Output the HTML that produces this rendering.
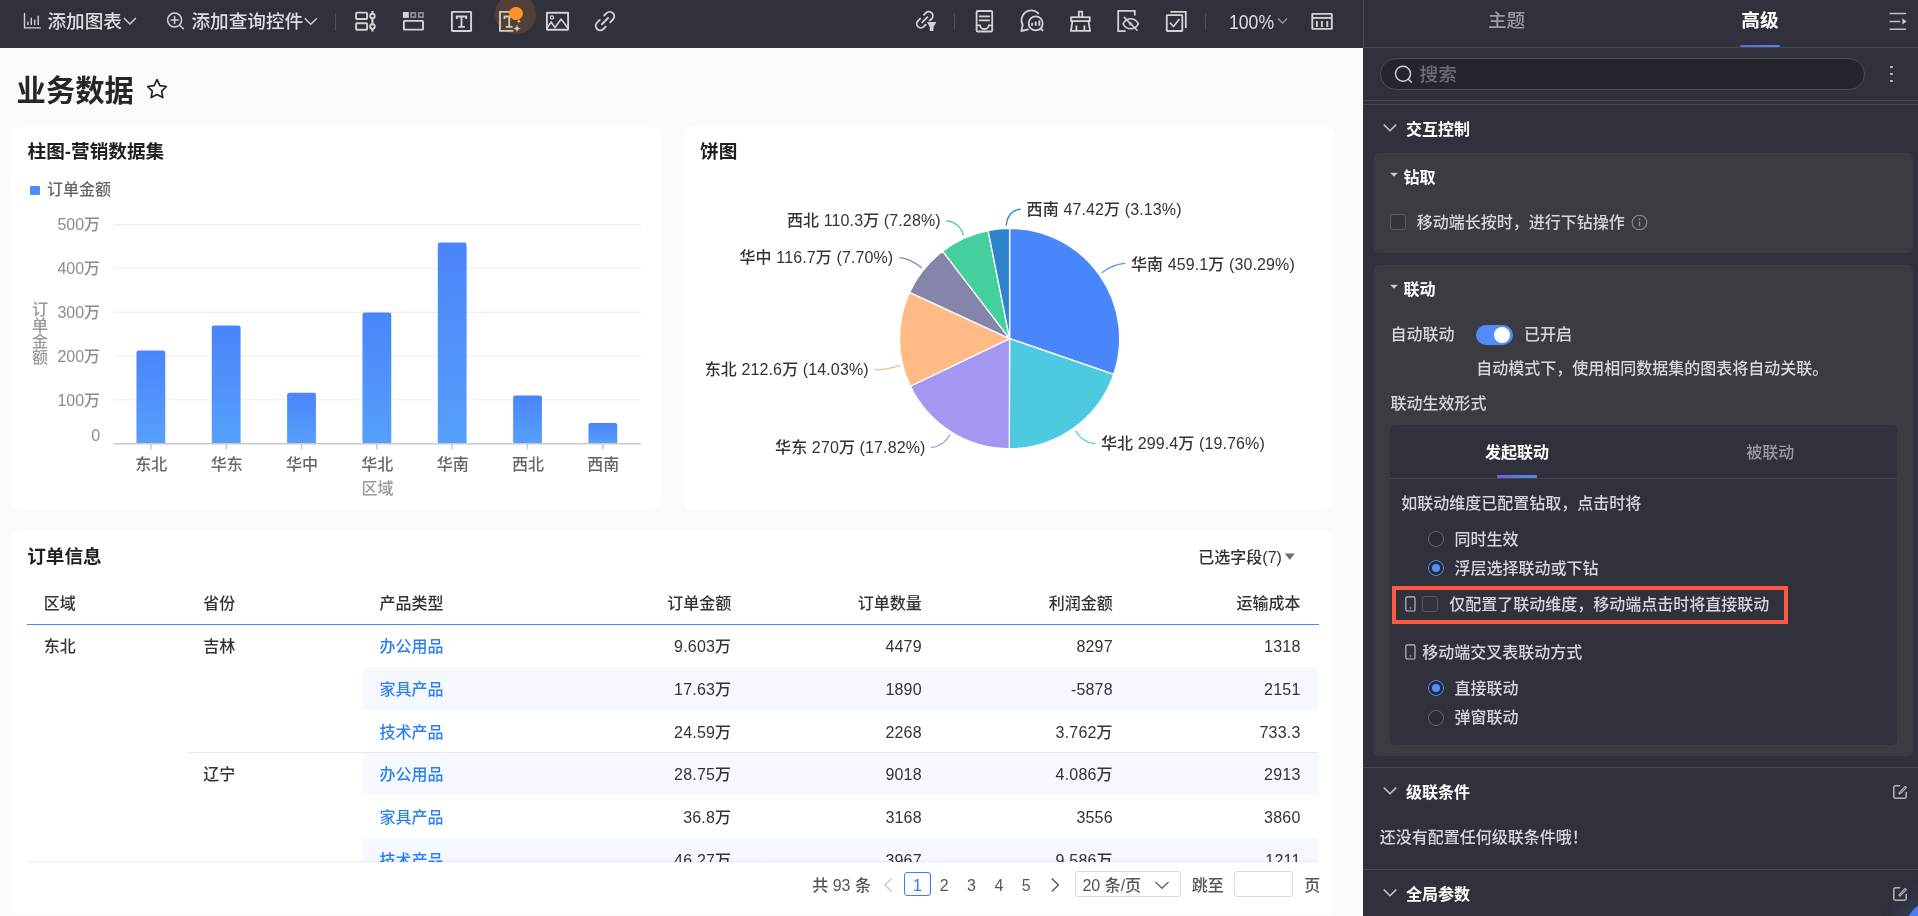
<!DOCTYPE html>
<html lang="zh-CN"><head><meta charset="utf-8"><title>业务数据</title>
<style>
html,body{margin:0;padding:0;}
body{width:1918px;height:916px;overflow:hidden;position:relative;background:#fafafa;font-family:"Liberation Sans","Noto Sans CJK SC",sans-serif;}
.t{position:absolute;white-space:nowrap;}
.b{position:absolute;}
svg text{font-family:"Liberation Sans","Noto Sans CJK SC",sans-serif;}
</style></head><body><div id="root" style="position:absolute;left:0;top:0;width:1918px;height:916px;overflow:hidden;will-change:transform;">
<div class="b" style="left:0px;top:47px;width:1363.00px;height:869.00px;background:#fafafa;"></div>
<div class="t" style="left:16.6px;top:70.84px;font-size:29.3px;line-height:40px;color:#262626;font-weight:700;">业务数据</div>
<svg class="b" style="left:145px;top:77px;" width="24" height="24" viewBox="0 0 24 24"><path d="M12 2.6l2.9 6 6.5.9-4.7 4.6 1.1 6.5L12 17.5l-5.8 3.1 1.1-6.5L2.6 9.5l6.5-.9z" fill="none" stroke="#222" stroke-width="1.7" stroke-linejoin="round"/></svg>
<div class="b" style="left:10.8px;top:125.7px;width:651.70px;height:384.10px;background:#fff;border-radius:10px;"></div>
<div class="b" style="left:684px;top:125.7px;width:650.60px;height:384.10px;background:#fff;border-radius:10px;"></div>
<div class="b" style="left:10.8px;top:530.8px;width:1323.80px;height:384.40px;background:#fff;border-radius:10px;"></div>
<div class="t" style="left:27.5px;top:139.24px;font-size:18.65px;line-height:26px;color:#1f1f1f;font-weight:700;">柱图-营销数据集</div>
<div class="b" style="left:30.3px;top:185.7px;width:9.60px;height:9.60px;background:#4e8bfb;border-radius:1px;"></div>
<div class="t" style="left:47px;top:179.40px;font-size:16px;line-height:22px;color:#666;font-weight:500;">订单金额</div>
<svg class="b" style="left:0px;top:0px;pointer-events:none;" width="700" height="520" viewBox="0 0 700 520"><defs><linearGradient id="bg" x1="0" y1="0" x2="0" y2="1"><stop offset="0" stop-color="#4a84fb"/><stop offset="1" stop-color="#56a0fb"/></linearGradient></defs><line x1="113.7" x2="641.0" y1="399.95" y2="399.95" stroke="#efefef" stroke-width="1.3"/><line x1="113.7" x2="641.0" y1="356.10" y2="356.10" stroke="#efefef" stroke-width="1.3"/><line x1="113.7" x2="641.0" y1="312.25" y2="312.25" stroke="#efefef" stroke-width="1.3"/><line x1="113.7" x2="641.0" y1="268.40" y2="268.40" stroke="#efefef" stroke-width="1.3"/><line x1="113.7" x2="641.0" y1="224.55" y2="224.55" stroke="#efefef" stroke-width="1.3"/><path d="M136.46 443.8 V352.77 Q136.46 350.57 138.66 350.57 H163.06 Q165.26 350.57 165.26 352.77 V443.8 Z" fill="url(#bg)"/><line x1="150.86" x2="150.86" y1="443.8" y2="449.40000000000003" stroke="#c6c6c6" stroke-width="1.4"/><path d="M211.79 443.8 V327.60 Q211.79 325.40 213.99 325.40 H238.39 Q240.59 325.40 240.59 327.60 V443.8 Z" fill="url(#bg)"/><line x1="226.19" x2="226.19" y1="443.8" y2="449.40000000000003" stroke="#c6c6c6" stroke-width="1.4"/><path d="M287.12 443.8 V394.83 Q287.12 392.63 289.32 392.63 H313.72 Q315.92 392.63 315.92 394.83 V443.8 Z" fill="url(#bg)"/><line x1="301.52" x2="301.52" y1="443.8" y2="449.40000000000003" stroke="#c6c6c6" stroke-width="1.4"/><path d="M362.45 443.8 V314.71 Q362.45 312.51 364.65 312.51 H389.05 Q391.25 312.51 391.25 314.71 V443.8 Z" fill="url(#bg)"/><line x1="376.85" x2="376.85" y1="443.8" y2="449.40000000000003" stroke="#c6c6c6" stroke-width="1.4"/><path d="M437.78 443.8 V244.68 Q437.78 242.48 439.98 242.48 H464.38 Q466.58 242.48 466.58 244.68 V443.8 Z" fill="url(#bg)"/><line x1="452.18" x2="452.18" y1="443.8" y2="449.40000000000003" stroke="#c6c6c6" stroke-width="1.4"/><path d="M513.11 443.8 V397.63 Q513.11 395.43 515.31 395.43 H539.71 Q541.91 395.43 541.91 397.63 V443.8 Z" fill="url(#bg)"/><line x1="527.51" x2="527.51" y1="443.8" y2="449.40000000000003" stroke="#c6c6c6" stroke-width="1.4"/><path d="M588.44 443.8 V425.21 Q588.44 423.01 590.64 423.01 H615.04 Q617.24 423.01 617.24 425.21 V443.8 Z" fill="url(#bg)"/><line x1="602.84" x2="602.84" y1="443.8" y2="449.40000000000003" stroke="#c6c6c6" stroke-width="1.4"/><line x1="113.7" x2="641.0" y1="443.8" y2="443.8" stroke="#c9c9c9" stroke-width="1.4"/></svg>
<div class="t" style="right:1817.9px;top:425.30px;font-size:16px;line-height:22px;color:#8c8c8c;font-weight:500;">0</div>
<div class="t" style="right:1817.9px;top:389.85px;font-size:16px;line-height:22px;color:#8c8c8c;font-weight:500;">100万</div>
<div class="t" style="right:1817.9px;top:346.00px;font-size:16px;line-height:22px;color:#8c8c8c;font-weight:500;">200万</div>
<div class="t" style="right:1817.9px;top:302.15px;font-size:16px;line-height:22px;color:#8c8c8c;font-weight:500;">300万</div>
<div class="t" style="right:1817.9px;top:258.30px;font-size:16px;line-height:22px;color:#8c8c8c;font-weight:500;">400万</div>
<div class="t" style="right:1817.9px;top:214.45px;font-size:16px;line-height:22px;color:#8c8c8c;font-weight:500;">500万</div>
<div class="t" style="left:151.3642857142857px;transform:translateX(-50%);top:454.20px;font-size:16px;line-height:22px;color:#666;font-weight:500;">东北</div>
<div class="t" style="left:226.69285714285712px;transform:translateX(-50%);top:454.20px;font-size:16px;line-height:22px;color:#666;font-weight:500;">华东</div>
<div class="t" style="left:302.02142857142854px;transform:translateX(-50%);top:454.20px;font-size:16px;line-height:22px;color:#666;font-weight:500;">华中</div>
<div class="t" style="left:377.34999999999997px;transform:translateX(-50%);top:454.20px;font-size:16px;line-height:22px;color:#666;font-weight:500;">华北</div>
<div class="t" style="left:452.6785714285714px;transform:translateX(-50%);top:454.20px;font-size:16px;line-height:22px;color:#666;font-weight:500;">华南</div>
<div class="t" style="left:528.0071428571429px;transform:translateX(-50%);top:454.20px;font-size:16px;line-height:22px;color:#666;font-weight:500;">西北</div>
<div class="t" style="left:603.3357142857143px;transform:translateX(-50%);top:454.20px;font-size:16px;line-height:22px;color:#666;font-weight:500;">西南</div>
<div class="t" style="left:377.4px;transform:translateX(-50%);top:477.70px;font-size:16px;line-height:22px;color:#999;font-weight:500;">区域</div>
<div class="t" style="left:40.1px;transform:translateX(-50%);top:302.30px;font-size:16px;line-height:16px;color:#999;font-weight:500;">订</div>
<div class="t" style="left:40.1px;transform:translateX(-50%);top:318.35px;font-size:16px;line-height:16px;color:#999;font-weight:500;">单</div>
<div class="t" style="left:40.1px;transform:translateX(-50%);top:334.40px;font-size:16px;line-height:16px;color:#999;font-weight:500;">金</div>
<div class="t" style="left:40.1px;transform:translateX(-50%);top:350.45px;font-size:16px;line-height:16px;color:#999;font-weight:500;">额</div>
<div class="t" style="left:700px;top:139.24px;font-size:18.65px;line-height:26px;color:#1f1f1f;font-weight:700;">饼图</div>
<svg class="b" style="left:684px;top:110px;pointer-events:none;" width="660" height="410" viewBox="684 110 660 410"><path d="M1009.6 338.55 L1009.60 228.45 A110.1 110.1 0 0 1 1113.68 374.46 Z" fill="#4a86fb" stroke="#fff" stroke-width="1.3" stroke-linejoin="round"/><path d="M1009.6 338.55 L1113.68 374.46 A110.1 110.1 0 0 1 1009.29 448.65 Z" fill="#4dc9e0" stroke="#fff" stroke-width="1.3" stroke-linejoin="round"/><path d="M1009.6 338.55 L1009.29 448.65 A110.1 110.1 0 0 1 910.39 386.28 Z" fill="#a497f2" stroke="#fff" stroke-width="1.3" stroke-linejoin="round"/><path d="M1009.6 338.55 L910.39 386.28 A110.1 110.1 0 0 1 909.66 292.35 Z" fill="#ffbb85" stroke="#fff" stroke-width="1.3" stroke-linejoin="round"/><path d="M1009.6 338.55 L909.66 292.35 A110.1 110.1 0 0 1 942.62 251.17 Z" fill="#8585ab" stroke="#fff" stroke-width="1.3" stroke-linejoin="round"/><path d="M1009.6 338.55 L942.62 251.17 A110.1 110.1 0 0 1 988.09 230.57 Z" fill="#45cf9d" stroke="#fff" stroke-width="1.3" stroke-linejoin="round"/><path d="M1009.6 338.55 L988.09 230.57 A110.1 110.1 0 0 1 1009.60 228.45 Z" fill="#2e83cc" stroke="#fff" stroke-width="1.3" stroke-linejoin="round"/><path d="M1101.9 272.7 Q1112.7 264.1 1125.1 263.3" fill="none" stroke="#4a86fb" stroke-width="1.3"/><path d="M1075.5 430.7 Q1082.1 442.3 1095.3 443.9" fill="none" stroke="#4dc9e0" stroke-width="1.3"/><path d="M950 434.5 Q944.1 446 930.9 447.7" fill="none" stroke="#a497f2" stroke-width="1.3"/><path d="M900.5 365.4 Q885.7 370.3 874.2 369.5" fill="none" stroke="#ffbb85" stroke-width="1.3"/><path d="M921.7 267.9 Q911.2 258.8 899.4 257.6" fill="none" stroke="#8585ab" stroke-width="1.3"/><path d="M963.6 235.4 Q959.6 222.3 946.3 220.7" fill="none" stroke="#45cf9d" stroke-width="1.3"/><path d="M1006.2 225.8 Q1007.6 210.2 1020.8 209.2" fill="none" stroke="#2e83cc" stroke-width="1.3"/></svg>
<div class="t" style="left:1026.6px;top:198.90px;font-size:16px;line-height:22px;color:#333;font-weight:500;letter-spacing:0.12px;">西南 47.42万 (3.13%)</div>
<div class="t" style="left:1130.9px;top:253.50px;font-size:16px;line-height:22px;color:#333;font-weight:500;letter-spacing:0.12px;">华南 459.1万 (30.29%)</div>
<div class="t" style="left:1100.9px;top:433.40px;font-size:16px;line-height:22px;color:#333;font-weight:500;letter-spacing:0.12px;">华北 299.4万 (19.76%)</div>
<div class="t" style="right:992.5px;top:436.50px;font-size:16px;line-height:22px;color:#333;font-weight:500;letter-spacing:0.12px;">华东 270万 (17.82%)</div>
<div class="t" style="right:1049.3px;top:359.10px;font-size:16px;line-height:22px;color:#333;font-weight:500;letter-spacing:0.12px;">东北 212.6万 (14.03%)</div>
<div class="t" style="right:1024.7px;top:246.80px;font-size:16px;line-height:22px;color:#333;font-weight:500;letter-spacing:0.12px;">华中 116.7万 (7.70%)</div>
<div class="t" style="right:977.3px;top:210.10px;font-size:16px;line-height:22px;color:#333;font-weight:500;letter-spacing:0.12px;">西北 110.3万 (7.28%)</div>
<div class="t" style="left:27.2px;top:543.94px;font-size:18.65px;line-height:26px;color:#1f1f1f;font-weight:700;">订单信息</div>
<div class="t" style="left:1198.3px;top:547.30px;font-size:16px;line-height:22px;color:#333;font-weight:500;">已选字段(7)</div>
<svg class="b" style="left:1284px;top:552px;" width="12" height="10" viewBox="0 0 12 10"><path d="M0.8 1.5h10l-5 6.2z" fill="#666a80"/></svg>
<div class="b" style="left:0;top:0;width:1918px;height:862.4px;overflow:hidden;">
<div class="b" style="left:363.2px;top:667.0200000000001px;width:955.30px;height:42.72px;background:#f5f8ff;"></div>
<div class="b" style="left:363.2px;top:752.46px;width:955.30px;height:42.72px;background:#f5f8ff;"></div>
<div class="b" style="left:363.2px;top:837.9000000000001px;width:955.30px;height:42.72px;background:#f5f8ff;"></div>
<div class="b" style="left:186.8px;top:751.96px;width:1131.70px;height:1.00px;background:#e9e9e9;"></div>
<div class="t" style="left:43.7px;top:592.90px;font-size:16px;line-height:22px;color:#333;font-weight:500;">区域</div>
<div class="t" style="left:203.2px;top:592.90px;font-size:16px;line-height:22px;color:#333;font-weight:500;">省份</div>
<div class="t" style="left:379.6px;top:592.90px;font-size:16px;line-height:22px;color:#333;font-weight:500;">产品类型</div>
<div class="t" style="right:1186.7px;top:592.90px;font-size:16px;line-height:22px;color:#333;font-weight:500;">订单金额</div>
<div class="t" style="right:996.2px;top:592.90px;font-size:16px;line-height:22px;color:#333;font-weight:500;">订单数量</div>
<div class="t" style="right:805.2px;top:592.90px;font-size:16px;line-height:22px;color:#333;font-weight:500;">利润金额</div>
<div class="t" style="right:617.5px;top:592.90px;font-size:16px;line-height:22px;color:#333;font-weight:500;">运输成本</div>
<div class="b" style="left:27px;top:623.5px;width:1291.50px;height:1.40px;background:#4a86fb;"></div>
<div class="t" style="left:379.6px;top:636.26px;font-size:16px;line-height:22px;color:#2b80f2;font-weight:500;">办公用品</div>
<div class="t" style="right:1186.7px;top:636.26px;font-size:16px;line-height:22px;color:#333;font-weight:500;letter-spacing:0.2px;">9.603万</div>
<div class="t" style="right:996.2px;top:636.26px;font-size:16px;line-height:22px;color:#333;font-weight:500;letter-spacing:0.2px;">4479</div>
<div class="t" style="right:805.2px;top:636.26px;font-size:16px;line-height:22px;color:#333;font-weight:500;letter-spacing:0.2px;">8297</div>
<div class="t" style="right:617.5px;top:636.26px;font-size:16px;line-height:22px;color:#333;font-weight:500;letter-spacing:0.2px;">1318</div>
<div class="t" style="left:379.6px;top:678.98px;font-size:16px;line-height:22px;color:#2b80f2;font-weight:500;">家具产品</div>
<div class="t" style="right:1186.7px;top:678.98px;font-size:16px;line-height:22px;color:#333;font-weight:500;letter-spacing:0.2px;">17.63万</div>
<div class="t" style="right:996.2px;top:678.98px;font-size:16px;line-height:22px;color:#333;font-weight:500;letter-spacing:0.2px;">1890</div>
<div class="t" style="right:805.2px;top:678.98px;font-size:16px;line-height:22px;color:#333;font-weight:500;letter-spacing:0.2px;">-5878</div>
<div class="t" style="right:617.5px;top:678.98px;font-size:16px;line-height:22px;color:#333;font-weight:500;letter-spacing:0.2px;">2151</div>
<div class="t" style="left:379.6px;top:721.70px;font-size:16px;line-height:22px;color:#2b80f2;font-weight:500;">技术产品</div>
<div class="t" style="right:1186.7px;top:721.70px;font-size:16px;line-height:22px;color:#333;font-weight:500;letter-spacing:0.2px;">24.59万</div>
<div class="t" style="right:996.2px;top:721.70px;font-size:16px;line-height:22px;color:#333;font-weight:500;letter-spacing:0.2px;">2268</div>
<div class="t" style="right:805.2px;top:721.70px;font-size:16px;line-height:22px;color:#333;font-weight:500;letter-spacing:0.2px;">3.762万</div>
<div class="t" style="right:617.5px;top:721.70px;font-size:16px;line-height:22px;color:#333;font-weight:500;letter-spacing:0.2px;">733.3</div>
<div class="t" style="left:379.6px;top:764.42px;font-size:16px;line-height:22px;color:#2b80f2;font-weight:500;">办公用品</div>
<div class="t" style="right:1186.7px;top:764.42px;font-size:16px;line-height:22px;color:#333;font-weight:500;letter-spacing:0.2px;">28.75万</div>
<div class="t" style="right:996.2px;top:764.42px;font-size:16px;line-height:22px;color:#333;font-weight:500;letter-spacing:0.2px;">9018</div>
<div class="t" style="right:805.2px;top:764.42px;font-size:16px;line-height:22px;color:#333;font-weight:500;letter-spacing:0.2px;">4.086万</div>
<div class="t" style="right:617.5px;top:764.42px;font-size:16px;line-height:22px;color:#333;font-weight:500;letter-spacing:0.2px;">2913</div>
<div class="t" style="left:379.6px;top:807.14px;font-size:16px;line-height:22px;color:#2b80f2;font-weight:500;">家具产品</div>
<div class="t" style="right:1186.7px;top:807.14px;font-size:16px;line-height:22px;color:#333;font-weight:500;letter-spacing:0.2px;">36.8万</div>
<div class="t" style="right:996.2px;top:807.14px;font-size:16px;line-height:22px;color:#333;font-weight:500;letter-spacing:0.2px;">3168</div>
<div class="t" style="right:805.2px;top:807.14px;font-size:16px;line-height:22px;color:#333;font-weight:500;letter-spacing:0.2px;">3556</div>
<div class="t" style="right:617.5px;top:807.14px;font-size:16px;line-height:22px;color:#333;font-weight:500;letter-spacing:0.2px;">3860</div>
<div class="t" style="left:379.6px;top:849.86px;font-size:16px;line-height:22px;color:#2b80f2;font-weight:500;">技术产品</div>
<div class="t" style="right:1186.7px;top:849.86px;font-size:16px;line-height:22px;color:#333;font-weight:500;letter-spacing:0.2px;">46.27万</div>
<div class="t" style="right:996.2px;top:849.86px;font-size:16px;line-height:22px;color:#333;font-weight:500;letter-spacing:0.2px;">3967</div>
<div class="t" style="right:805.2px;top:849.86px;font-size:16px;line-height:22px;color:#333;font-weight:500;letter-spacing:0.2px;">9.586万</div>
<div class="t" style="right:617.5px;top:849.86px;font-size:16px;line-height:22px;color:#333;font-weight:500;letter-spacing:0.2px;">1211</div>
<div class="t" style="left:43.7px;top:636.26px;font-size:16px;line-height:22px;color:#333;font-weight:500;">东北</div>
<div class="t" style="left:203.2px;top:636.26px;font-size:16px;line-height:22px;color:#333;font-weight:500;">吉林</div>
<div class="t" style="left:203.2px;top:764.42px;font-size:16px;line-height:22px;color:#333;font-weight:500;">辽宁</div>
</div>
<div class="b" style="left:27px;top:857.8px;width:1291.50px;height:5.00px;background:linear-gradient(rgba(0,0,0,0),rgba(0,0,0,0.045));"></div>
<div class="t" style="left:812.2px;top:874.90px;font-size:16px;line-height:22px;color:#555;font-weight:500;">共 93 条</div>
<svg class="b" style="left:882px;top:877.0px;" width="12" height="16" viewBox="0 0 12 16"><path d="M9.6 1.6L3 8l6.6 6.400" fill="none" stroke="#c8c8c8" stroke-width="1.400"/></svg>
<div class="b" style="left:904.3px;top:872.4px;width:26.50px;height:23.20px;background:#fff;border-radius:3px;border:1.3px solid #3a7ff5;box-sizing:border-box;"></div>
<div class="t" style="left:917.5px;transform:translateX(-50%);top:874.90px;font-size:16px;line-height:22px;color:#2b80f2;font-weight:500;">1</div>
<div class="t" style="left:944.2px;transform:translateX(-50%);top:874.90px;font-size:16px;line-height:22px;color:#555;font-weight:500;">2</div>
<div class="t" style="left:971.4px;transform:translateX(-50%);top:874.90px;font-size:16px;line-height:22px;color:#555;font-weight:500;">3</div>
<div class="t" style="left:999px;transform:translateX(-50%);top:874.90px;font-size:16px;line-height:22px;color:#555;font-weight:500;">4</div>
<div class="t" style="left:1026.2px;transform:translateX(-50%);top:874.90px;font-size:16px;line-height:22px;color:#555;font-weight:500;">5</div>
<svg class="b" style="left:1049px;top:877.0px;" width="12" height="16" viewBox="0 0 12 16"><path d="M2.800 1.600L9.400 8l-6.600 6.400" fill="none" stroke="#555" stroke-width="1.400"/></svg>
<div class="b" style="left:1075px;top:871px;width:105.60px;height:26.00px;background:#fff;border-radius:3px;border:1.3px solid #dcdcdc;box-sizing:border-box;"></div>
<div class="t" style="left:1082.4px;top:874.90px;font-size:16px;line-height:22px;color:#555;font-weight:500;">20 条/页</div>
<svg class="b" style="left:1153px;top:878.0px;" width="18" height="14" viewBox="0 0 18 14"><path d="M2.5 4l6.5 6.3L15.5 4" fill="none" stroke="#666" stroke-width="1.4"/></svg>
<div class="t" style="left:1191.8px;top:874.90px;font-size:16px;line-height:22px;color:#555;font-weight:500;">跳至</div>
<div class="b" style="left:1234.2px;top:871px;width:58.40px;height:26.00px;background:#fff;border-radius:3px;border:1.3px solid #dcdcdc;box-sizing:border-box;"></div>
<div class="t" style="left:1304.2px;top:874.90px;font-size:16px;line-height:22px;color:#555;font-weight:500;">页</div>
<div class="b" style="left:0px;top:0px;width:1363.00px;height:47.50px;background:#30313b;"></div>
<svg class="b" style="left:20px;top:8px;" width="26" height="26" viewBox="20 8 26 26"><g fill="none" stroke="#d3d3d5" stroke-width="1.4" stroke-linecap="round" stroke-linejoin="round"><path d="M24.5 12.9V27.9H40.8" stroke-linecap="butt" stroke-linejoin="miter"/><path d="M27.9 25V21.5M31.3 25V17.8M34.7 25V19.8M38.2 25V15.7" stroke-width="1.4" stroke-linecap="butt"/></g></svg>
<div class="t" style="left:47.4px;top:9.34px;font-size:18.65px;line-height:26px;color:#dfdfe1;font-weight:500;">添加图表</div>
<svg class="b" style="left:120px;top:12px;" width="20" height="18" viewBox="120 12 20 18"><g fill="none" stroke="#d3d3d5" stroke-width="1.4" stroke-linecap="round" stroke-linejoin="round"><path d="M123.9 18l6 6.1 6-6.1" stroke-linecap="butt" stroke-linejoin="miter"/></g></svg>
<svg class="b" style="left:162px;top:8px;" width="26" height="26" viewBox="162 8 26 26"><g fill="none" stroke="#d3d3d5" stroke-width="1.5" stroke-linecap="round" stroke-linejoin="round"><circle cx="174.6" cy="20.1" r="7"/><path d="M179.7 25.2L183.4 28.7M171.1 20.1h7M174.6 16.6v7"/></g></svg>
<div class="t" style="left:191.4px;top:9.34px;font-size:18.65px;line-height:26px;color:#dfdfe1;font-weight:500;">添加查询控件</div>
<svg class="b" style="left:300px;top:12px;" width="20" height="18" viewBox="300 12 20 18"><g fill="none" stroke="#d3d3d5" stroke-width="1.4" stroke-linecap="round" stroke-linejoin="round"><path d="M304.7 18.2l6.1 6.1 6.1-6.1" stroke-linecap="butt" stroke-linejoin="miter"/></g></svg>
<div class="b" style="left:335px;top:13.4px;width:1.10px;height:17.60px;background:#50515a;"></div>
<svg class="b" style="left:352px;top:8px;" width="26" height="26" viewBox="352 8 26 26"><g fill="none" stroke="#d3d3d5" stroke-width="1.9" stroke-linecap="round" stroke-linejoin="round"><rect x="356.1" y="12.6" width="11" height="6.4" rx="0.8"/><rect x="356.1" y="23.3" width="11" height="6.4" rx="0.8"/><path d="M372.4 11V13.6M372.4 18.4V24.1M372.4 28.9V31.6" stroke-linecap="butt" stroke-width="2.2"/><circle cx="372.4" cy="16" r="2.3"/><circle cx="372.4" cy="26.5" r="2.3"/></g></svg>
<svg class="b" style="left:400px;top:8px;" width="28" height="26" viewBox="400 8 28 26"><g fill="none" stroke="#d3d3d5" stroke-width="1.9" stroke-linecap="round" stroke-linejoin="round"><rect x="402.9" y="12" width="5.9" height="5.9" fill="#d3d3d5" stroke="none"/><rect x="411.1" y="12.9" width="4.2" height="4.2" stroke="#8b8c93" stroke-width="1.8" stroke-linejoin="miter"/><rect x="418.8" y="12.9" width="4.2" height="4.2" stroke="#8b8c93" stroke-width="1.8" stroke-linejoin="miter"/><rect x="403.9" y="20.9" width="19.1" height="8.7" rx="0.6"/></g></svg>
<svg class="b" style="left:448px;top:8px;" width="28" height="28" viewBox="448 8 28 28"><g fill="none" stroke="#d3d3d5" stroke-width="1.9" stroke-linecap="round" stroke-linejoin="round"><rect x="451.9" y="11.9" width="19.2" height="19.1" rx="0.5" stroke-linejoin="miter"/><path d="M456.8 18.9V16.5H466.2V18.9M461.5 16.5V26.9M458.1 26.9H464.9" stroke-width="1.9" stroke-linecap="butt" stroke-linejoin="miter"/></g></svg>
<svg class="b" style="left:496px;top:8px;" width="30" height="28" viewBox="496 8 30 28"><g fill="none" stroke="#d3d3d5" stroke-width="1.9" stroke-linecap="round" stroke-linejoin="round"><path d="M513 11.9H500V30.9H513.4" stroke-linecap="butt" stroke-linejoin="miter"/><path d="M504.5 18.9V16.5H513.9V18.9M509.2 16.5V26.9M505.8 26.9H512.6" stroke-width="1.9" stroke-linecap="butt" stroke-linejoin="miter"/><path d="M517 24.6c.45 2.6 1.3 3.450 3.900 3.900-2.600.450-3.450 1.300-3.900 3.900-.450-2.600-1.300-3.450-3.900-3.900 2.600-.450 3.450-1.300 3.900-3.900z" fill="#d3d3d5" stroke="none"/><path d="M518.900 18.800c.300 1.600.800 2.100 2.400 2.400-1.600.300-2.100.800-2.400 2.400-.300-1.600-.800-2.100-2.400-2.400 1.600-.300 2.100-.800 2.400-2.400z" fill="#d3d3d5" stroke="none"/></g></svg>
<div class="b" style="left:495.1px;top:-6.3px;width:40.6px;height:40.6px;border-radius:50%;background:rgba(255,146,38,0.155);"></div>
<div class="b" style="left:509.1px;top:6.800px;width:13.900px;height:13.600px;border-radius:50%;background:#ff9429;"></div>
<svg class="b" style="left:543px;top:8px;" width="30" height="26" viewBox="543 8 30 26"><g fill="none" stroke="#d3d3d5" stroke-width="1.9" stroke-linecap="round" stroke-linejoin="round"><rect x="546.9" y="12.7" width="21.2" height="17" rx="0.4" stroke-linejoin="miter"/><circle cx="551.9" cy="17.5" r="1.600" stroke-width="1.300"/><path d="M547.4 27.800l3.600-5.800 4 5.400 6.200-8.300 6.400 8.700" stroke-width="1.600"/></g></svg>
<svg class="b" style="left:592px;top:8px;" width="28" height="28" viewBox="592 8 28 28"><g fill="none" stroke="#d3d3d5" stroke-width="1.9" stroke-linecap="round" stroke-linejoin="round"><g transform="translate(605 21.1) rotate(-45)"><path d="M3.3 -4.5H6.7A4.5 4.5 0 0 1 6.7 4.5H2.8" /><path d="M-3.3 4.5H-6.7A4.5 4.5 0 0 1 -6.7 -4.5H-2.8" /><path d="M-4.422000000000001 0H4.422000000000001"/></g></g></svg>
<svg class="b" style="left:912px;top:8px;" width="28" height="28" viewBox="912 8 28 28"><g fill="none" stroke="#d3d3d5" stroke-width="1.8" stroke-linecap="round" stroke-linejoin="round"><g transform="translate(924.8 19.8) rotate(-45)"><path d="M2.9 -4.1H5.6A4.1 4.1 0 0 1 5.6 4.1H2.5" /><path d="M-2.9 4.1H-5.6A4.1 4.1 0 0 1 -5.6 -4.1H-2.5" /><path d="M-3.6959999999999997 0H3.6959999999999997"/></g><path d="M926.9 22.1h9.500l-2.900 5v3.800h-3.700v-3.800z" fill="#d3d3d5" stroke="#30313b" stroke-width="1.6" paint-order="stroke" stroke-linejoin="miter"/></g></svg>
<div class="b" style="left:954px;top:12.9px;width:1.10px;height:16.00px;background:#50515a;"></div>
<svg class="b" style="left:972px;top:8px;" width="26" height="28" viewBox="972 8 26 28"><g fill="none" stroke="#d3d3d5" stroke-width="1.8" stroke-linecap="round" stroke-linejoin="round"><rect x="976.6" y="11" width="15.6" height="20.500" rx="1"/><path d="M979.6 16.300h9.600M979.6 20.300h9.600"/><path d="M976.6 25.400h3.600a4.200 3.600 0 0 0 8.400 0h3.600"/></g></svg>
<svg class="b" style="left:1017px;top:8px;" width="30" height="28" viewBox="1017 8 30 28"><g fill="none" stroke="#d3d3d5" stroke-width="1.8" stroke-linecap="round" stroke-linejoin="round"><path d="M1038.3 13.400a9.800 9.800 0 0 0-15.600 11.600l-1.400 6 6.600-1.500"/><circle cx="1035.7" cy="23.400" r="7"/><path d="M1032.100 25.700v-2.900M1035.700 25.700v-4.100M1039.300 25.700v-5.300" stroke-linecap="butt" stroke-width="1.900"/><path d="M1040.900 28.600l1.600 1.700" stroke-width="2"/></g></svg>
<svg class="b" style="left:1066px;top:8px;" width="30" height="28" viewBox="1066 8 30 28"><g fill="none" stroke="#d3d3d5" stroke-width="1.8" stroke-linecap="round" stroke-linejoin="round"><path d="M1078.800 17.200v-5.500h3.400v5.500" stroke-linejoin="miter"/><rect x="1071.200" y="17.200" width="18.500" height="3.900" stroke-linejoin="miter"/><path d="M1072.400 21.100l-1.500 9.700h19.100l-1.500-9.700" stroke-linejoin="miter"/><path d="M1076.400 30.800v-5.200M1084.400 30.800v-5.200" stroke-linecap="butt"/></g></svg>
<svg class="b" style="left:1114px;top:6px;" width="30" height="30" viewBox="1114 6 30 30"><g fill="none" stroke="#d3d3d5" stroke-width="1.8" stroke-linecap="round" stroke-linejoin="round"><path d="M1134.800 15.400V10.900H1118.200V31.200H1125.600" stroke-linejoin="miter" stroke-linecap="butt"/><path d="M1123 23.800c2.200-3.600 4.800-5 7.700-5s5.500 1.400 7.700 5c-2.200 3.600-4.800 5-7.700 5s-5.500-1.400-7.700-5z" stroke-width="1.600"/><circle cx="1130.600" cy="23.800" r="1.900" fill="#9c9da3" stroke="none"/><path d="M1124.300 17.400l12.800 12.800" stroke-width="1.600"/></g></svg>
<svg class="b" style="left:1162px;top:8px;" width="30" height="28" viewBox="1162 8 30 28"><g fill="none" stroke="#d3d3d5" stroke-width="1.8" stroke-linecap="round" stroke-linejoin="round"><rect x="1166.800" y="15.100" width="15.500" height="15.900" rx="0.400" stroke-linejoin="miter"/><path d="M1170.300 11.900H1185.800V27.900" stroke-linejoin="miter" stroke-linecap="butt"/><path d="M1169.900 22.700l3.700 3.800 5.800-7.400" stroke-width="1.700" stroke-linejoin="miter" stroke-linecap="butt"/></g></svg>
<div class="b" style="left:1204.8px;top:12.9px;width:1.10px;height:16.00px;background:#50515a;"></div>
<div class="t" style="left:1229.3px;top:8.80px;font-size:19.6px;line-height:26px;color:#dededf;font-weight:400;transform:scaleX(0.9);transform-origin:0 50%;">100%</div>
<svg class="b" style="left:1274px;top:12px;" width="18" height="18" viewBox="1274 12 18 18"><g fill="none" stroke="#a0a1a8" stroke-width="1.2" stroke-linecap="round" stroke-linejoin="round"><path d="M1278 18.500l4.500 4.600 4.500-4.600" stroke-linecap="butt" stroke-linejoin="miter"/></g></svg>
<svg class="b" style="left:1308px;top:8px;" width="28" height="26" viewBox="1308 8 28 26"><g fill="none" stroke="#d3d3d5" stroke-width="1.9" stroke-linecap="round" stroke-linejoin="round"><rect x="1312.300" y="13.900" width="19.500" height="15" rx="0.400" stroke-linejoin="miter"/><path d="M1312.300 17.900h19.500" stroke-linecap="butt"/><path d="M1316.900 20.900v6.200M1321.900 20.900v6.200M1327.300 20.900v6.200" stroke-linecap="butt" stroke-width="1.900"/></g></svg>
<div class="b" style="left:1363px;top:0px;width:555.00px;height:916.00px;background:#30313b;"></div>
<div class="b" style="left:1363px;top:0px;width:1.10px;height:47.50px;background:#4a4b54;"></div>
<div class="b" style="left:1363px;top:47px;width:555.00px;height:1.10px;background:#47484f;"></div>
<div class="t" style="left:1506.6px;transform:translateX(-50%);top:7.84px;font-size:18.65px;line-height:26px;color:#9a9ba3;font-weight:500;">主题</div>
<div class="t" style="left:1760px;transform:translateX(-50%);top:7.74px;font-size:18.65px;line-height:26px;color:#fff;font-weight:700;">高级</div>
<div class="b" style="left:1740px;top:44.5px;width:39.80px;height:2.70px;background:linear-gradient(90deg,#6b62de,#4b8df0);border-radius:1px;"></div>
<svg class="b" style="left:1888px;top:11px;" width="20" height="20" viewBox="0 0 20 20"><g fill="none" stroke="#c4c4c8" stroke-width="1.5"><path d="M1.600 2.600h16.400M1.600 10.400h10.600M1.600 18.200h16.400"/></g><path d="M14.400 7.200l4.200 3.200-4.200 3.200z" fill="#c4c4c8"/></svg>
<div class="b" style="left:1380.4px;top:58.2px;width:484.40px;height:31.40px;background:#25262d;border-radius:16px;border:1.2px solid #4b4c55;box-sizing:border-box;"></div>
<svg class="b" style="left:1393px;top:63.6px;" width="22" height="22" viewBox="0 0 22 22"><g fill="none" stroke="#d2d2d5" stroke-width="1.400" stroke-linecap="round"><circle cx="10" cy="9.800" r="7.500"/><path d="M15.400 15.200l3 3"/></g></svg>
<div class="t" style="left:1419.6px;top:61.84px;font-size:18.65px;line-height:26px;color:#6d6e77;font-weight:500;">搜索</div>
<div class="b" style="left:1890.2px;top:65.5px;width:2.80px;height:2.80px;background:#c4c4c8;border-radius:1.4px;"></div>
<div class="b" style="left:1890.2px;top:72.5px;width:2.80px;height:2.80px;background:#c4c4c8;border-radius:1.4px;"></div>
<div class="b" style="left:1890.2px;top:79.5px;width:2.80px;height:2.80px;background:#c4c4c8;border-radius:1.4px;"></div>
<div class="b" style="left:1363px;top:100px;width:555.00px;height:1.00px;background:#47484f;"></div>
<div class="b" style="left:1363px;top:104px;width:555.00px;height:1.00px;background:#47484f;"></div>
<svg class="b" style="left:1382.2px;top:122.19999999999999px;" width="16" height="12" viewBox="0 0 16 12"><path d="M1.800 2.600l6.200 6.200 6.200-6.200" fill="none" stroke="#c4c4c8" stroke-width="1.500"/></svg>
<div class="t" style="left:1405.9px;top:118.80px;font-size:16px;line-height:22px;color:#fff;font-weight:700;">交互控制</div>
<div class="b" style="left:1374px;top:152.8px;width:538.60px;height:100.60px;background:#3b3c42;border-radius:5px;"></div>
<svg class="b" style="left:1389px;top:172.2px;" width="10" height="6" viewBox="0 0 10 6"><path d="M1.200 0.800h7.600l-3.800 4z" fill="#c9c9cd"/></svg>
<div class="t" style="left:1403.5px;top:166.80px;font-size:16px;line-height:22px;color:#fff;font-weight:700;">钻取</div>
<div class="b" style="left:1390.3px;top:214.2px;width:15.80px;height:15.80px;background:#33343a;border-radius:3px;border:1.1px solid #595a61;box-sizing:border-box;"></div>
<div class="t" style="left:1416.8px;top:212.20px;font-size:16px;line-height:22px;color:#d7d7db;font-weight:500;">移动端长按时，进行下钻操作</div>
<svg class="b" style="left:1631.4px;top:213.8px;" width="17" height="17" viewBox="0 0 17 17"><g fill="none" stroke="#8a8b92" stroke-width="1.100"><circle cx="8.500" cy="8.500" r="7.300"/></g><path d="M8.500 7.400v4.800" stroke="#8f9098" stroke-width="1.300"/><circle cx="8.500" cy="5.200" r="0.900" fill="#8f9098"/></svg>
<div class="b" style="left:1374px;top:265.1px;width:538.60px;height:491.10px;background:#3b3c42;border-radius:5px;"></div>
<svg class="b" style="left:1389px;top:283.9px;" width="10" height="6" viewBox="0 0 10 6"><path d="M1.200 0.800h7.600l-3.800 4z" fill="#c9c9cd"/></svg>
<div class="t" style="left:1403.5px;top:279.20px;font-size:16px;line-height:22px;color:#fff;font-weight:700;">联动</div>
<div class="t" style="left:1390.4px;top:323.90px;font-size:16px;line-height:22px;color:#d7d7db;font-weight:500;">自动联动</div>
<div class="b" style="left:1475.8px;top:325.1px;width:37.20px;height:20.40px;background:#528bfc;border-radius:10.2px;"></div>
<div class="b" style="left:1493.9px;top:327.1px;width:16.40px;height:16.40px;background:#fff;border-radius:8.2px;"></div>
<div class="t" style="left:1524.0px;top:323.90px;font-size:16px;line-height:22px;color:#d7d7db;font-weight:500;">已开启</div>
<div class="t" style="left:1476.2px;top:358.00px;font-size:16px;line-height:22px;color:#d7d7db;font-weight:500;">自动模式下，使用相同数据集的图表将自动关联。</div>
<div class="t" style="left:1390.4px;top:393.20px;font-size:16px;line-height:22px;color:#d7d7db;font-weight:500;">联动生效形式</div>
<div class="b" style="left:1390px;top:425.2px;width:507.10px;height:319.80px;background:#30313b;border-radius:5px;"></div>
<div class="t" style="left:1517.1px;transform:translateX(-50%);top:442.10px;font-size:16px;line-height:22px;color:#fff;font-weight:700;">发起联动</div>
<div class="t" style="left:1770.2px;transform:translateX(-50%);top:442.10px;font-size:16px;line-height:22px;color:#9a9ba3;font-weight:500;">被联动</div>
<div class="b" style="left:1497px;top:474.7px;width:39.90px;height:3.10px;background:linear-gradient(90deg,#6b62de,#4b8df0);border-radius:1px;"></div>
<div class="b" style="left:1390px;top:477.9px;width:507.10px;height:1.10px;background:#47484f;"></div>
<div class="t" style="left:1401.3px;top:493.20px;font-size:16px;line-height:22px;color:#d7d7db;font-weight:500;">如联动维度已配置钻取，点击时将</div>
<div class="b" style="left:1427.8000000000002px;top:531.0px;width:16.20px;height:16.20px;background:#2b2c33;border-radius:8.1px;border:1.1px solid #66676e;box-sizing:border-box;"></div>
<div class="t" style="left:1454.6px;top:529.00px;font-size:16px;line-height:22px;color:#d7d7db;font-weight:500;">同时生效</div>
<div class="b" style="left:1427.8000000000002px;top:559.8px;width:16.20px;height:16.20px;background:#2b2c33;border-radius:8.1px;border:1.2px solid #4f88fb;box-sizing:border-box;"></div>
<div class="b" style="left:1431.9px;top:563.9px;width:8.00px;height:8.00px;background:#5590ff;border-radius:4px;"></div>
<div class="t" style="left:1454.6px;top:557.80px;font-size:16px;line-height:22px;color:#d7d7db;font-weight:500;">浮层选择联动或下钻</div>
<div class="b" style="left:1391.9px;top:585.8px;width:396.60px;height:38.40px;border:4px solid #fb5a46;box-sizing:border-box;"></div>
<svg class="b" style="left:1404.8px;top:596.2px;" width="11" height="16" viewBox="0 0 11 16"><rect x="0.800" y="0.800" width="9.200" height="14.200" rx="1.600" fill="none" stroke="#bdbdc1" stroke-width="1.150"/><circle cx="5.400" cy="12" r="0.800" fill="#bdbdc1"/></svg>
<div class="b" style="left:1422.3px;top:596.4px;width:15.80px;height:15.80px;background:#33343a;border-radius:3px;border:1.1px solid #595a61;box-sizing:border-box;"></div>
<div class="t" style="left:1449.3px;top:594.40px;font-size:16px;line-height:22px;color:#d7d7db;font-weight:500;">仅配置了联动维度，移动端点击时将直接联动</div>
<svg class="b" style="left:1404.8px;top:644.2px;" width="11" height="16" viewBox="0 0 11 16"><rect x="0.800" y="0.800" width="9.200" height="14.200" rx="1.600" fill="none" stroke="#bdbdc1" stroke-width="1.150"/><circle cx="5.400" cy="12" r="0.800" fill="#bdbdc1"/></svg>
<div class="t" style="left:1422.3px;top:641.90px;font-size:16px;line-height:22px;color:#d7d7db;font-weight:500;">移动端交叉表联动方式</div>
<div class="b" style="left:1427.8000000000002px;top:680.1999999999999px;width:16.20px;height:16.20px;background:#2b2c33;border-radius:8.1px;border:1.2px solid #4f88fb;box-sizing:border-box;"></div>
<div class="b" style="left:1431.9px;top:684.3px;width:8.00px;height:8.00px;background:#5590ff;border-radius:4px;"></div>
<div class="t" style="left:1454.6px;top:678.20px;font-size:16px;line-height:22px;color:#d7d7db;font-weight:500;">直接联动</div>
<div class="b" style="left:1427.8000000000002px;top:709.6px;width:16.20px;height:16.20px;background:#2b2c33;border-radius:8.1px;border:1.1px solid #66676e;box-sizing:border-box;"></div>
<div class="t" style="left:1454.6px;top:707.10px;font-size:16px;line-height:22px;color:#d7d7db;font-weight:500;">弹窗联动</div>
<div class="b" style="left:1363px;top:767px;width:555.00px;height:1.10px;background:#47484f;"></div>
<svg class="b" style="left:1382.2px;top:785.4px;" width="16" height="12" viewBox="0 0 16 12"><path d="M1.800 2.600l6.200 6.200 6.200-6.200" fill="none" stroke="#c4c4c8" stroke-width="1.500"/></svg>
<div class="t" style="left:1405.9px;top:782.40px;font-size:16px;line-height:22px;color:#fff;font-weight:700;">级联条件</div>
<svg class="b" style="left:1892px;top:784px;" width="16" height="16" viewBox="0 0 16 16"><g fill="none" stroke="#b6b6ba" stroke-width="1.500" stroke-linecap="round" stroke-linejoin="round"><path d="M7.600 1.800H3.400a1.600 1.600 0 0 0-1.600 1.600v9.200a1.600 1.600 0 0 0 1.600 1.600h9.200a1.600 1.600 0 0 0 1.600-1.600V8.400"/><path d="M6.800 9.200l6.400-6.800 1.200 1.200-6.600 6.600z" stroke-width="1.200"/></g></svg>
<div class="t" style="left:1379.7px;top:827.20px;font-size:16px;line-height:22px;color:#d7d7db;font-weight:500;">还没有配置任何级联条件哦！</div>
<div class="b" style="left:1363px;top:868.6px;width:555.00px;height:1.10px;background:#47484f;"></div>
<svg class="b" style="left:1382.2px;top:887px;" width="16" height="12" viewBox="0 0 16 12"><path d="M1.800 2.600l6.200 6.200 6.200-6.200" fill="none" stroke="#c4c4c8" stroke-width="1.500"/></svg>
<div class="t" style="left:1405.9px;top:884.00px;font-size:16px;line-height:22px;color:#fff;font-weight:700;">全局参数</div>
<svg class="b" style="left:1892px;top:885.6px;" width="16" height="16" viewBox="0 0 16 16"><g fill="none" stroke="#b6b6ba" stroke-width="1.500" stroke-linecap="round" stroke-linejoin="round"><path d="M7.600 1.800H3.400a1.600 1.600 0 0 0-1.600 1.600v9.200a1.600 1.600 0 0 0 1.600 1.600h9.200a1.600 1.600 0 0 0 1.600-1.600V8.400"/><path d="M6.800 9.200l6.400-6.800 1.200 1.200-6.600 6.600z" stroke-width="1.200"/></g></svg>
<div class="b" style="left:1905px;top:900px;width:62px;height:62px;border-radius:50%;background:#4a7dfa;box-shadow:0 0 22px 4px rgba(74,125,250,0.22);"></div>
</div></body></html>
